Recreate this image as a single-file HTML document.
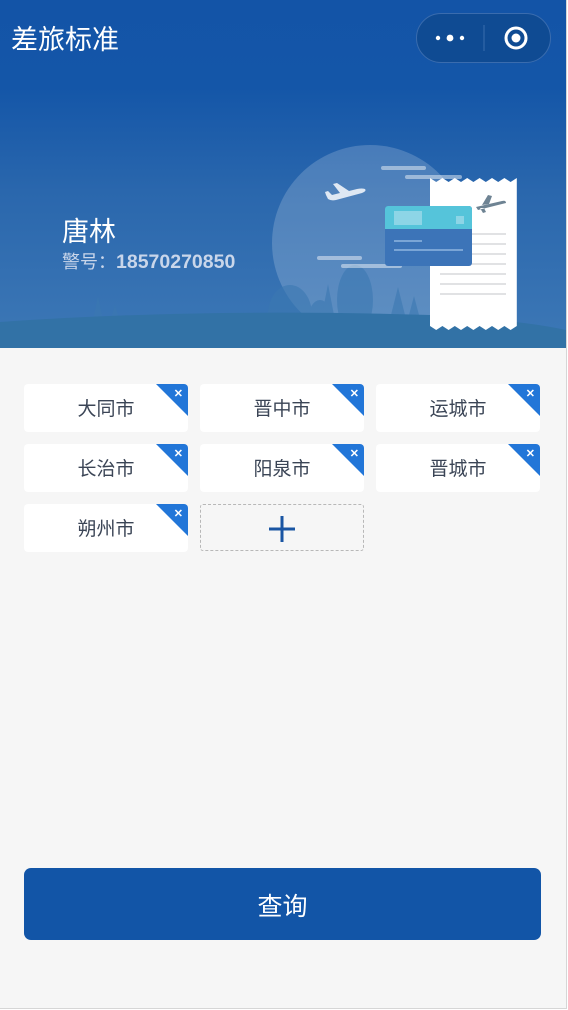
<!DOCTYPE html>
<html><head><meta charset="utf-8">
<style>
*{margin:0;padding:0;box-sizing:border-box}
html,body{width:568px;height:1010px;overflow:hidden;background:#fff}
body{font-family:"Liberation Sans","Noto Sans CJK SC",sans-serif;position:relative}
.page{position:absolute;left:0;top:0;width:567px;height:1009px;background:#f6f6f6;border-right:1px solid #d6d6d6;border-bottom:1px solid #d6d6d6}
.hdr{position:absolute;left:0;top:0;width:566px;height:348px;background:linear-gradient(180deg,#1354a7 0%,#1456a8 25%,#2a67ad 55%,#3d78b6 100%);overflow:hidden}
.title{position:absolute;left:11px;top:22px;color:#fff;font-size:27px;line-height:36px}
.cap{position:absolute;left:416px;top:13px;width:135px;height:50px;border-radius:25px;background:#0f4b93;border:1px solid #3a6cae}
.name{position:absolute;left:62px;top:215px;color:#fff;font-size:27px;line-height:34px}
.no{position:absolute;left:62px;top:250px;color:#c9d6ea;font-size:18px;line-height:24px}
.no span{font-size:19.5px;font-weight:bold}
.tag{position:absolute;width:164px;height:48px;background:#fff;border-radius:4px;overflow:hidden;text-align:center;line-height:52px;font-size:19px;color:#3b4556}
.tag:after{content:"";position:absolute;right:0;top:0;border-top:32px solid #2276d8;border-left:32px solid transparent}
.tag b{position:absolute;right:5px;top:-16px;color:#fff;font-size:11px;z-index:2;font-weight:bold}
.add{position:absolute;left:200px;top:504px;width:164px;height:47px;border:1px dashed #b8b8b8;border-radius:3px}
.btn{position:absolute;left:24px;top:868px;width:517px;height:72px;background:#1255a7;border-radius:7px;color:#fff;font-size:25px;text-align:center;line-height:78px}
</style></head><body>
<div class="page">
<div class="hdr">
<svg width="566" height="348" style="position:absolute;left:0;top:0">
<circle cx="370" cy="243" r="98" fill="#fff" opacity="0.18"/>
<g fill="#3b78b2" opacity="0.6">
<ellipse cx="290" cy="315" rx="22" ry="30"/><ellipse cx="355" cy="300" rx="18" ry="35"/><ellipse cx="320" cy="320" rx="12" ry="20"/>
<polygon points="328,284 322,315 334,315"/><polygon points="398,287 391,315 405,315"/><polygon points="414,296 409,315 419,315"/>
<polygon points="98,296 92,325 104,325"/><polygon points="115,305 109,325 121,325"/><polygon points="132,315 128,328 136,328"/>
</g>
<path d="M0 322 Q200 308 430 315 Q520 320 566 330 L566 348 L0 348 Z" fill="#3272a6"/>
<g stroke="#fff" stroke-linecap="round" stroke-width="4" opacity="0.45">
<line x1="383" y1="168" x2="424" y2="168"/><line x1="407" y1="177" x2="460" y2="177"/>
<line x1="319" y1="258" x2="360" y2="258"/><line x1="343" y1="266" x2="400" y2="266"/>
</g>
<path d="M430 178 l6.2 4 6.2-4 6.2 4 6.2-4 6.2 4 6.2-4 6.2 4 6.2-4 6.2 4 6.2-4 6.2 4 6.2-4 6.2 4 6.2-4 0 148 -6.2 4 -6.2-4 -6.2 4 -6.2-4 -6.2 4 -6.2-4 -6.2 4 -6.2-4 -6.2 4 -6.2-4 -6.2 4 -6.2-4 -6.2 4 -6.2-4 Z" fill="#fff"/>
<g stroke="#d7d9dc" stroke-width="1.5">
<line x1="440" y1="234" x2="506" y2="234"/><line x1="440" y1="244" x2="506" y2="244"/><line x1="440" y1="254" x2="506" y2="254"/><line x1="440" y1="264" x2="506" y2="264"/><line x1="440" y1="274" x2="506" y2="274"/><line x1="440" y1="284" x2="506" y2="284"/><line x1="440" y1="294" x2="506" y2="294"/>
</g>
<path d="M476 207 l26-6 q4-1 4 2 l-24 6 -4 1 z M482 205 l6-10 4 1 -3 8 z M480 208 l3 5 3-1 -2-4z" fill="#6e8393"/>
<path d="M326 195 l2 4 q3 2 8 1 l26-7 q5-2 3-4 q-3-1-8 0 l-8 2 -12-8 -4 1 7 9 -8 2 -4-4 -3 1z" fill="#dfe8f3"/>
<rect x="385" y="206" width="87" height="60" rx="3" fill="#3c74b8"/>
<path d="M385 209 a3 3 0 0 1 3-3 h81 a3 3 0 0 1 3 3 v20 h-87z" fill="#55c4da"/>
<rect x="394" y="211" width="28" height="14" fill="#8dd5e6"/><rect x="456" y="216" width="8" height="8" fill="#8dd5e6"/>
<line x1="394" y1="241" x2="422" y2="241" stroke="#7aa5d6" stroke-width="2"/><line x1="394" y1="250" x2="463" y2="250" stroke="#7aa5d6" stroke-width="2"/>
</svg>
<div class="title">差旅标准</div>
<div class="cap">
<svg width="135" height="50" style="position:absolute;left:-1px;top:-1px">
<circle cx="22" cy="25" r="2.2" fill="#fff"/><circle cx="34" cy="25" r="3.4" fill="#fff"/><circle cx="46" cy="25" r="2.2" fill="#fff"/>
<line x1="68" y1="12" x2="68" y2="38" stroke="#3a6cae" stroke-width="1"/>
<circle cx="100" cy="25" r="10" fill="none" stroke="#fff" stroke-width="3"/><circle cx="100" cy="25" r="4.5" fill="#fff"/>
</svg></div>
<div class="name">唐林</div>
<div class="no">警号：<span>18570270850</span></div>
</div>

<div class="tag" style="left:24px;top:384px">大同市<b>✕</b></div>
<div class="tag" style="left:200px;top:384px">晋中市<b>✕</b></div>
<div class="tag" style="left:376px;top:384px">运城市<b>✕</b></div>
<div class="tag" style="left:24px;top:444px">长治市<b>✕</b></div>
<div class="tag" style="left:200px;top:444px">阳泉市<b>✕</b></div>
<div class="tag" style="left:376px;top:444px">晋城市<b>✕</b></div>
<div class="tag" style="left:24px;top:504px">朔州市<b>✕</b></div>
<div class="add"><svg width="162" height="45" style="position:absolute;left:0;top:0"><line x1="81" y1="11" x2="81" y2="37" stroke="#1a55a3" stroke-width="3"/><line x1="68" y1="24" x2="94" y2="24" stroke="#1a55a3" stroke-width="3"/></svg></div>

<div class="btn">查询</div>
</div>
</body></html>
